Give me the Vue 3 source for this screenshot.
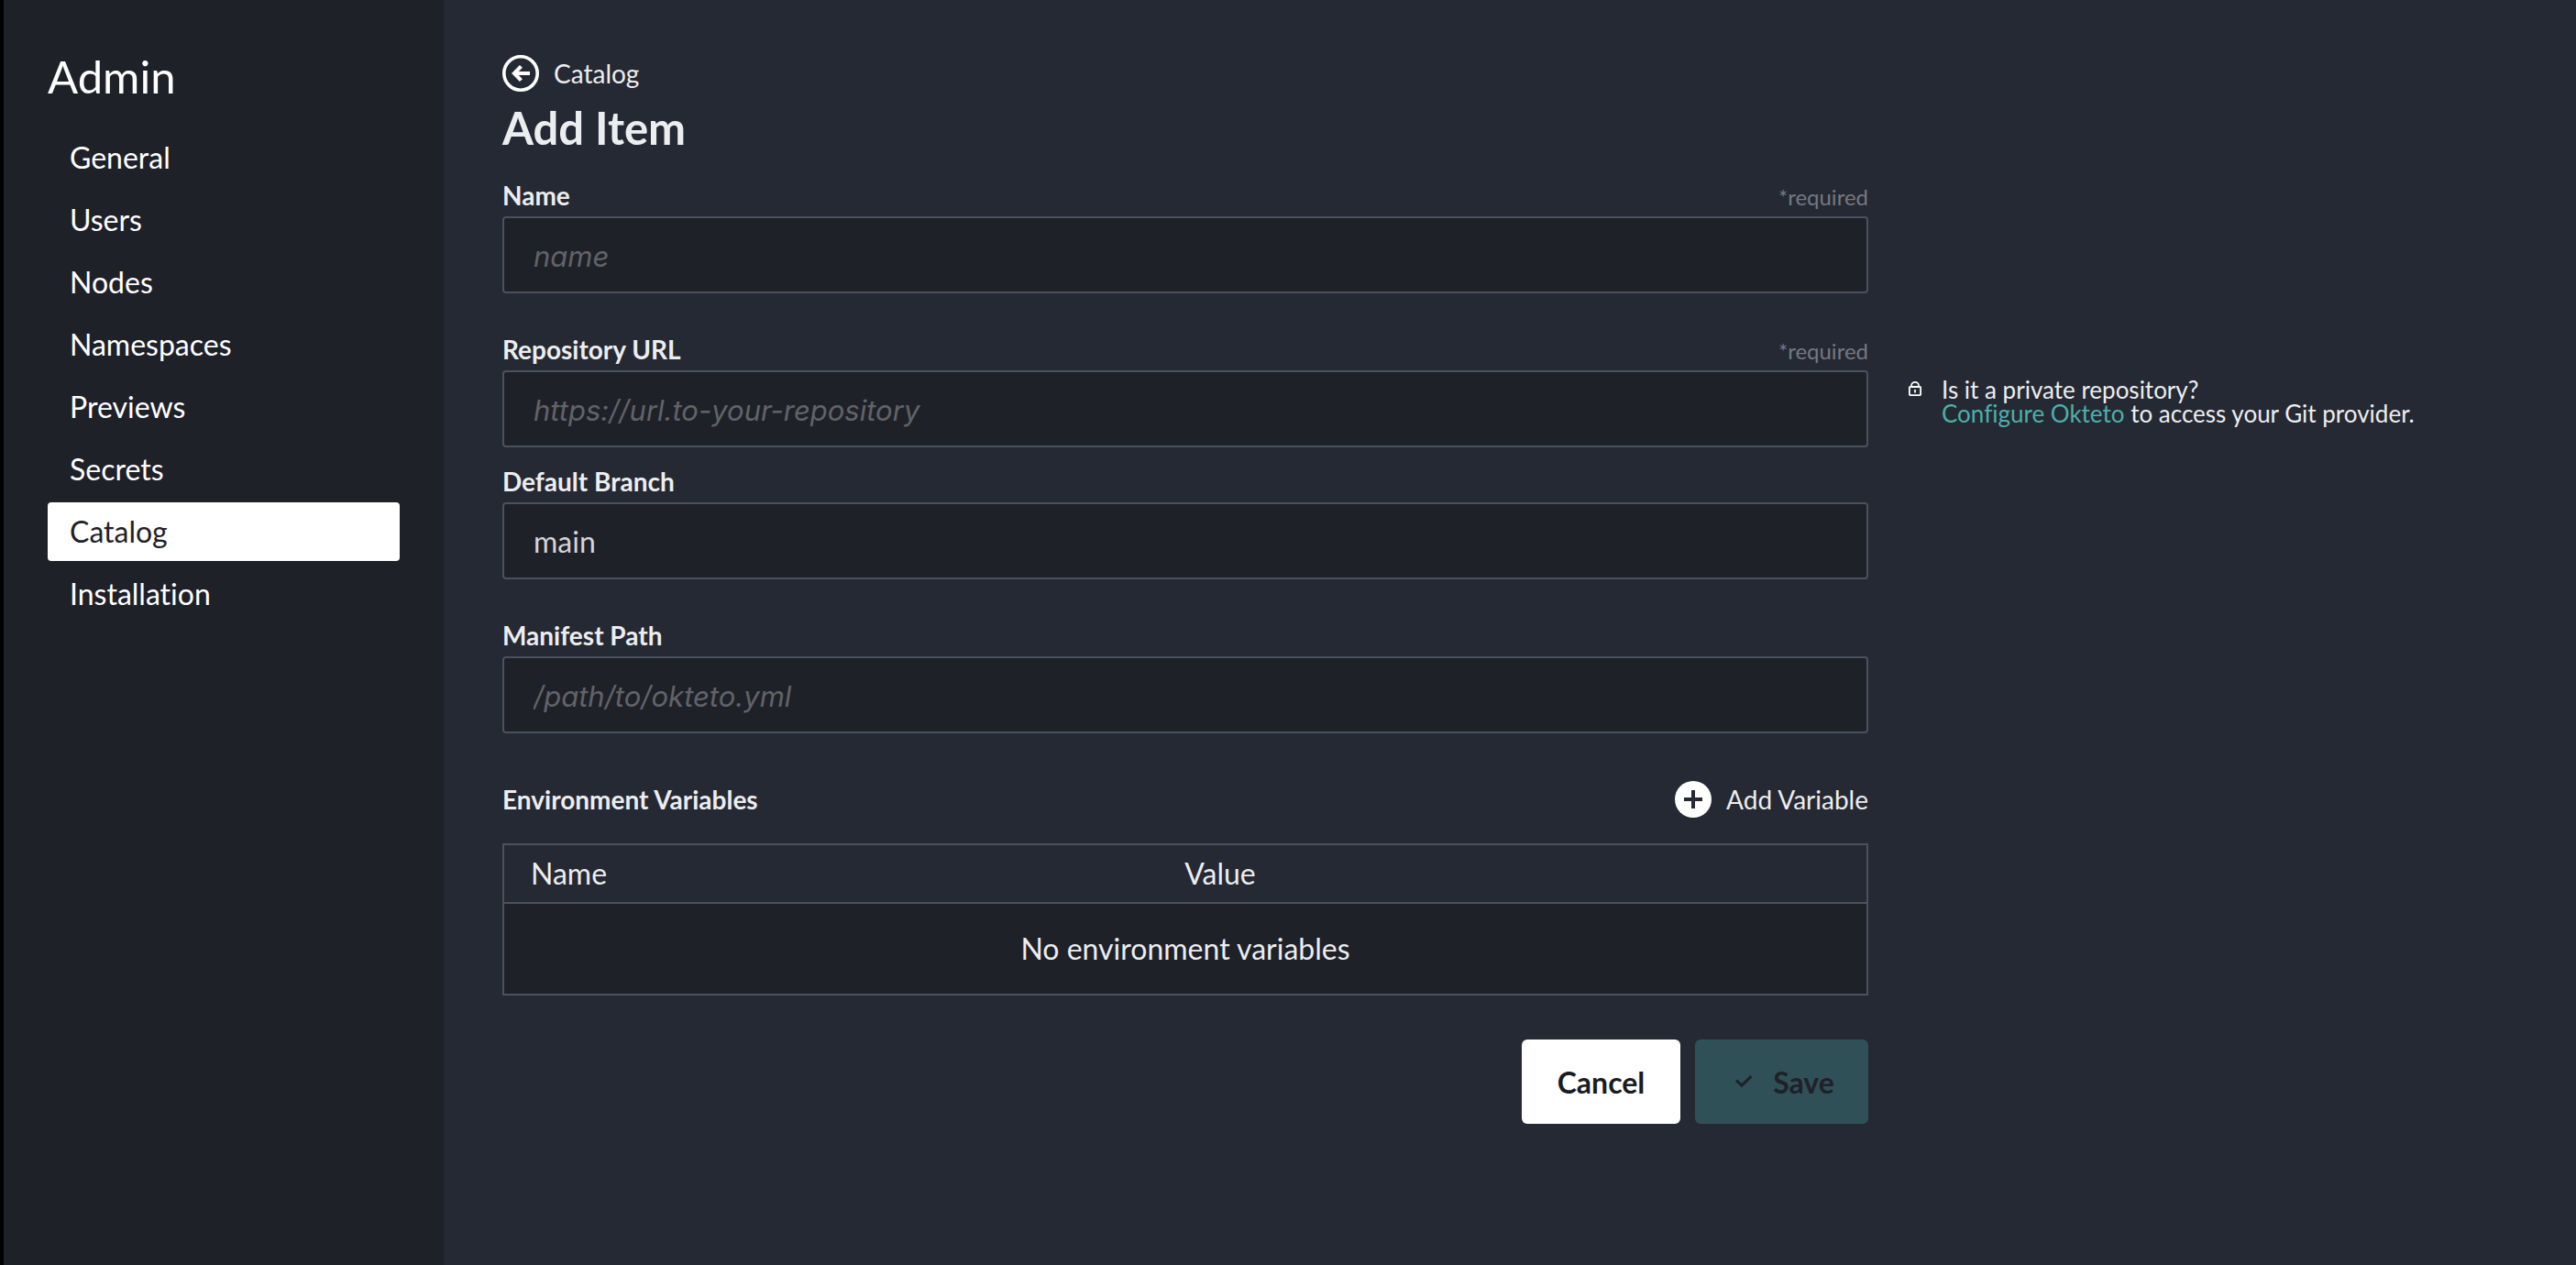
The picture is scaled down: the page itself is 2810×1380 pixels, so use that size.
<script setup>
import { ref } from 'vue'

const sections = ['General', 'Users', 'Nodes', 'Namespaces', 'Previews', 'Secrets', 'Catalog', 'Installation']
const current = ref('Catalog')

const name = ref('')
const repository = ref('')
const branch = ref('main')
const manifest = ref('')
</script>

<template>
  <div class="app">
    <aside class="sidebar">
      <h2 class="sidebar-title">Admin</h2>
      <nav class="nav" aria-label="Admin">
        <a
          v-for="section in sections"
          :key="section"
          href="#"
          class="nav-item"
          :class="{ active: section === current }"
          @click.prevent="current = section"
        >{{ section }}</a>
      </nav>
    </aside>

    <main class="main">
      <a href="#" class="back">
        <svg class="round-icon" viewBox="0 0 40 40" aria-hidden="true">
          <circle cx="20" cy="20" r="18.2" fill="none" stroke="#fff" stroke-width="3.6" />
          <path d="M30 20H13.5M20.4 12.4L13 20l7.4 7.6" fill="none" stroke="#fff" stroke-width="4.2" />
        </svg>
        <span>Catalog</span>
      </a>
      <h1 class="title">Add Item</h1>

      <form class="form" @submit.prevent>
        <div class="field">
          <div class="field-head">
            <label for="name">Name</label>
            <span class="required">*required</span>
          </div>
          <input id="name" v-model="name" type="text" placeholder="name" required />
        </div>

        <div class="field">
          <div class="field-head">
            <label for="repository">Repository URL</label>
            <span class="required">*required</span>
          </div>
          <input id="repository" v-model="repository" type="text" placeholder="https://url.to-your-repository" required />
        </div>

        <div class="hint">
          <svg class="lock" viewBox="0 0 14 16" aria-hidden="true">
            <path d="M3 6V4.6a4 3.8 0 0 1 8 0V6" fill="none" stroke="#fff" stroke-width="1.7" />
            <rect x="0.9" y="6" width="12.2" height="9.1" rx="0.8" fill="none" stroke="#fff" stroke-width="1.8" />
            <path d="M7 9v3.6" stroke="#fff" stroke-width="1.8" />
          </svg>
          <p>Is it a private repository?<br /><a href="#">Configure Okteto</a> to access your Git provider.</p>
        </div>

        <div class="field related">
          <div class="field-head">
            <label for="branch">Default Branch</label>
          </div>
          <input id="branch" v-model="branch" type="text" />
        </div>

        <div class="field">
          <div class="field-head">
            <label for="manifest">Manifest Path</label>
          </div>
          <input id="manifest" v-model="manifest" type="text" placeholder="/path/to/okteto.yml" />
        </div>

        <section class="variables">
          <div class="variables-head">
            <h3 id="variables-title">Environment Variables</h3>
            <button type="button" class="add">
              <svg class="round-icon" viewBox="0 0 40 40" aria-hidden="true">
                <circle cx="20" cy="20" r="20" fill="#fff" />
                <path d="M10 20h20M20 10v20" stroke="#252933" stroke-width="4" />
              </svg>
              <span>Add Variable</span>
            </button>
          </div>
          <table aria-labelledby="variables-title">
            <thead>
              <tr>
                <th class="col-name" scope="col">Name</th>
                <th scope="col">Value</th>
              </tr>
            </thead>
            <tbody>
              <tr>
                <td colspan="2">No environment variables</td>
              </tr>
            </tbody>
          </table>
        </section>

        <div class="actions">
          <button type="button" class="button cancel">Cancel</button>
          <button type="submit" class="button save" disabled>
            <svg class="check" viewBox="0 0 20 16" aria-hidden="true">
              <path d="M2 6.6l6 5.6L18.4 2.2" fill="none" stroke="currentColor" stroke-width="3" />
            </svg>
            <span>Save</span>
          </button>
        </div>
      </form>
    </main>
  </div>
</template>

<style>
body {
  background: #252933;
}
</style>

<style scoped>
.app {
  display: flex;
  min-height: 100vh;
  box-sizing: border-box;
  border-left: 4px solid #000;
  background: #252933;
  color: #ecedef;
  font-family: Lato, sans-serif;
  font-size: 32px;
  font-variant-ligatures: none;
}

h1,
h2,
h3,
p {
  margin: 0;
}

a {
  text-decoration: none;
}

input,
button {
  box-sizing: border-box;
  font: inherit;
}

.sidebar {
  flex: 0 0 480px;
  box-sizing: border-box;
  padding: 52px 48px;
  background: #1f2129;
  color: #fff;
}

.sidebar-title {
  font-size: 49px;
  font-weight: 400;
  line-height: 62px;
}

.nav {
  display: flex;
  flex-direction: column;
  gap: 4px;
  margin-top: 26px;
}

.nav-item {
  padding: 0 24px;
  border-radius: 4px;
  line-height: 64px;
  color: #fff;
}

.nav-item.active {
  background: #fff;
  color: #1f2129;
}

.main {
  flex: 1;
  min-width: 0;
  padding: 60px 64px;
}

.back {
  display: inline-flex;
  align-items: center;
  gap: 16px;
  color: inherit;
  font-size: 28px;
  line-height: 40px;
}

.round-icon {
  width: 40px;
  height: 40px;
}

.back,
.round-icon {
  vertical-align: top;
}

.title {
  margin-top: 8px;
  font-size: 49px;
  font-weight: 700;
  line-height: 62px;
}

.form {
  display: grid;
  grid-template-columns: minmax(0, 1490fr) minmax(0, 664fr);
  column-gap: 44px;
  margin-top: 26px;
}

.field,
.variables,
.actions {
  grid-column: 1;
}

.field + .field,
.related + .field {
  margin-top: 44px;
}

.related {
  margin-top: 20px;
}

.field-head {
  display: flex;
  justify-content: space-between;
  align-items: baseline;
  margin-bottom: 6px;
  font-size: 28px;
  line-height: 34px;
}

.field-head label {
  font-weight: 700;
}

.required {
  color: #757882;
  font-size: 24px;
  line-height: 28px;
}

.field input {
  display: block;
  width: 100%;
  height: 84px;
  padding: 0 32px;
  border: 2px solid #4d515f;
  border-radius: 4px;
  background: #1f2129;
  color: #d4d4d6;
}

.field input::placeholder {
  color: #626368;
  font-family: Inter, sans-serif;
  font-size: 31px;
  font-style: italic;
  opacity: 1;
}

.hint {
  grid-column: 2;
  display: flex;
  align-items: flex-start;
  gap: 22px;
  padding-top: 92px;
  font-size: 26px;
  line-height: 26px;
}

.lock {
  flex: none;
  width: 14px;
  height: 16px;
  margin-top: 4px;
}

.hint a {
  color: #4cb0aa;
}

.variables {
  margin-top: 52px;
}

.variables-head {
  display: flex;
  justify-content: space-between;
  align-items: center;
  margin-bottom: 28px;
}

.variables-head h3 {
  font-size: 28px;
  font-weight: 700;
  line-height: 40px;
}

.add {
  display: flex;
  align-items: center;
  gap: 16px;
  padding: 0;
  border: 0;
  background: none;
  color: inherit;
  font-size: 28px;
  line-height: 40px;
}

table {
  width: 100%;
  border: 2px solid #4d515f;
  border-spacing: 0;
  table-layout: fixed;
}

th {
  padding: 0 29px;
  font-weight: 400;
  line-height: 62px;
  text-align: left;
}

.col-name {
  width: 48%;
  box-sizing: border-box;
}

td {
  padding: 0 29px;
  border-top: 2px solid #4d515f;
  background: #1f2129;
  line-height: 98px;
  text-align: center;
}

.actions {
  display: flex;
  justify-content: flex-end;
  gap: 16px;
  margin-top: 48px;
}

.button {
  display: flex;
  justify-content: center;
  align-items: center;
  height: 92px;
  padding: 0 36px;
  border: 0;
  border-radius: 6px;
  font-weight: 700;
}

.cancel {
  min-width: 173px;
  background: #fff;
  color: #1a1c23;
}

.save {
  gap: 22px;
  padding-left: 42px;
  min-width: 189px;
  background: #305057;
  color: #1f2129;
}

.check {
  width: 20px;
  height: 16px;
}
</style>
